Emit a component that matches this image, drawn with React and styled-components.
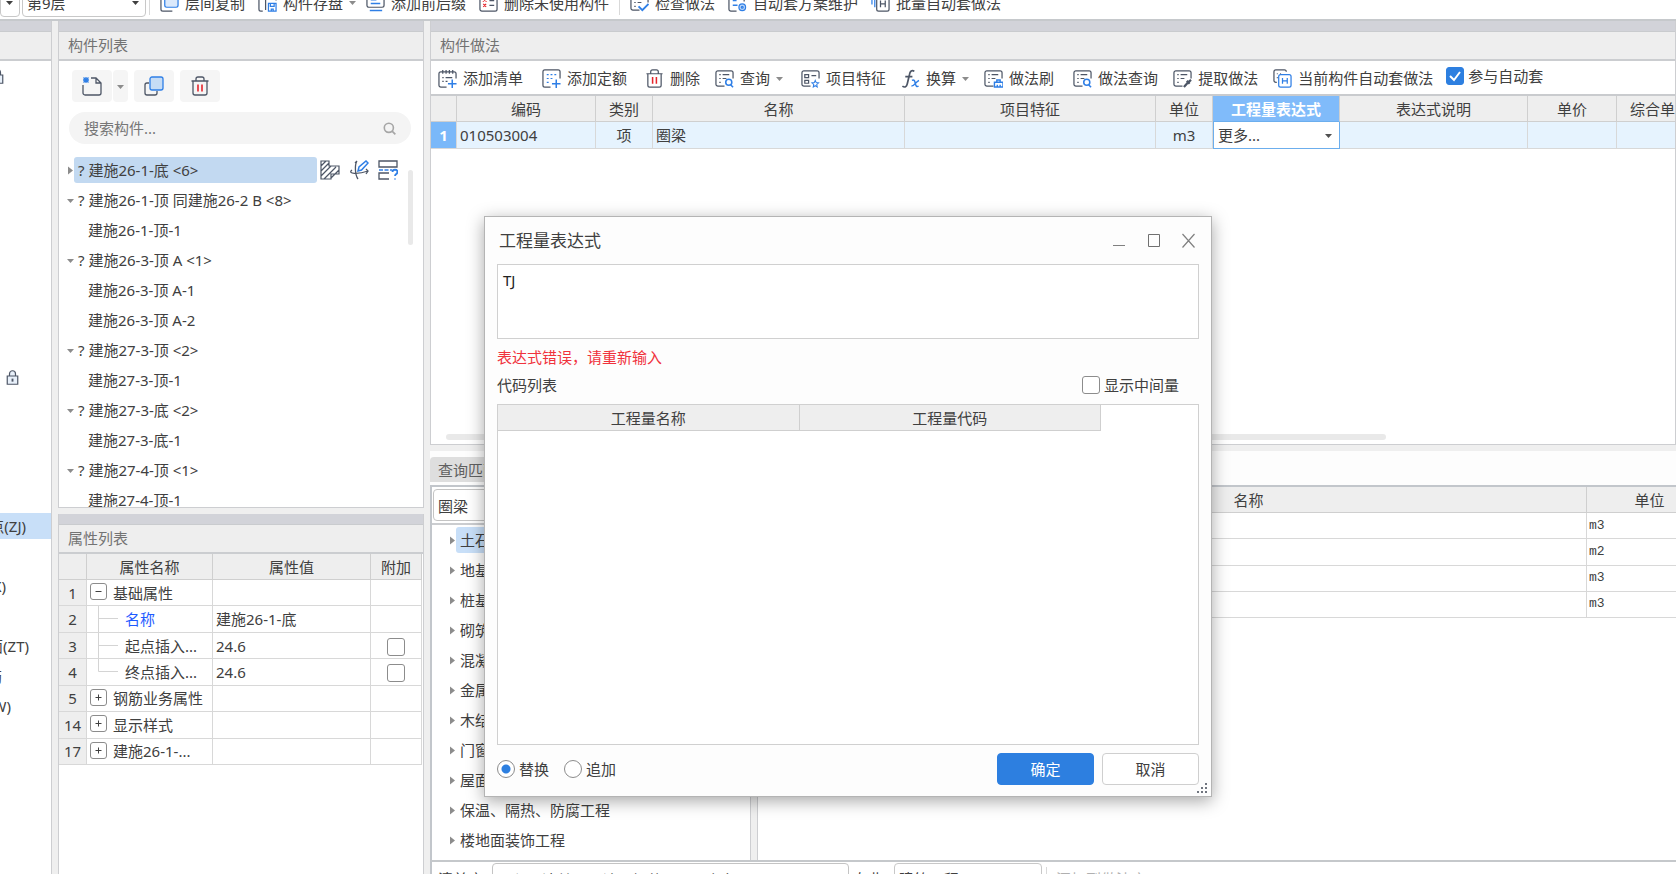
import React, { useState } from "react";
import styled, { createGlobalStyle } from "styled-components";

const GlobalStyle = createGlobalStyle`
	* {
		box-sizing: border-box;
	}
	body {
		margin: 0;
		overflow: hidden;
	}
	body, button, input, select, textarea {
		font-family: "Noto Sans", "Noto Sans CJK SC", sans-serif;
		font-size: 15px;
		line-height: 20px;
		color: #404040;
	}
	svg {
		flex: none;
	}
`;

const Page = styled.div`
	height: 100vh;
	display: flex;
	flex-direction: column;
	background-color: #efefef;
	position: relative;
	overflow: hidden;
	white-space: nowrap;
`;

/* top ribbon */
const Ribbon = styled.header`
	flex: none;
	height: 21px;
	display: flex;
	align-items: flex-end;
	overflow: hidden;
	background-color: #fff;
	border-bottom: 2px solid #c6c9cc;
`;
const RibbonRow = styled.div`
	height: 33px;
	display: flex;
	align-items: center;
`;
const Divider = styled.span`
	width: 1px;
	height: 24px;
	background-color: #d9d9d9;
	margin: ${(props) => props.$space};
`;

/* shared controls */
const ToolButton = styled.button`
	display: flex;
	align-items: center;
	gap: 6px;
	padding: 0;
	margin-right: ${(props) => (props.$gap || 15) + "px"};
	border: none;
	background: none;
	cursor: pointer;
	flex: none;
`;
const SelectWrap = styled.span`
	position: relative;
	display: flex;
	align-items: center;
	flex: none;
	width: ${(props) => props.$width};
	height: ${(props) => props.$height || "28px"};
	margin-right: ${(props) => (props.$cell ? "0" : "2px")};

	svg {
		position: absolute;
		right: 7px;
		pointer-events: none;
	}
`;
const Select = styled.select`
	appearance: none;
	width: 100%;
	height: 100%;
	padding: 0 4px;
	background-color: #fff;
	border: ${(props) => (props.$cell ? "none" : "1px solid #c8c8c8")};
	border-radius: ${(props) => (props.$cell ? "0" : "4px")};
	outline: none;
`;
const CheckBox = styled.input`
	appearance: none;
	flex: none;
	width: 18px;
	height: 18px;
	margin: 0;
	border: 1px solid #8c8c8c;
	border-radius: 3px;
	background-color: #fff;
	vertical-align: middle;

	&:checked {
		border-color: #2d7fe0;
		background: #2d7fe0
			url("data:image/svg+xml,%3Csvg xmlns='http://www.w3.org/2000/svg' viewBox='0 0 16 16'%3E%3Cpath d='M3 8l4 4 6-8' fill='none' stroke='white' stroke-width='2'/%3E%3C/svg%3E")
			center / 16px no-repeat;
	}
`;
const Radio = styled.input`
	appearance: none;
	width: 18px;
	height: 18px;
	margin: 0;
	border: 1px solid #8c8c8c;
	border-radius: 50%;
	background-color: #fff;

	&:checked {
		background: radial-gradient(circle, #2d7fe0 4px, #fff 5px);
	}
`;
const CheckLabel = styled.label`
	display: flex;
	align-items: center;
	gap: 4px;
	margin-right: ${(props) => (props.$right || 0) + "px"};
`;

/* panels */
const Workspace = styled.main`
	flex: 1;
	min-height: 0;
	display: flex;
	gap: 6px;
`;
const Column = styled.div`
	display: flex;
	flex-direction: column;
	gap: 6px;
	min-width: 0;
	flex: ${(props) => (props.$width ? `0 0 ${props.$width}` : "1")};
`;
const Panel = styled.section`
	display: flex;
	flex-direction: column;
	min-height: 0;
	overflow: hidden;
	background-color: #fff;
	border: 1px solid #cdced1;
	border-width: 0 1px 1px;
	flex: ${(props) => (props.$height ? `0 0 ${props.$height}` : "1")};
`;
const OpenPanel = styled(Panel)`
	border-bottom: none;
`;
const Band = styled.div`
	flex: none;
	height: 11px;
	background-color: #d2d3d9;
	border-bottom: 1px solid #c9cbce;
`;
const PanelTitle = styled.h2`
	flex: none;
	height: 29px;
	margin: 0;
	padding: 3px 9px;
	font-size: 15px;
	font-weight: 400;
	color: #737373;
	background-color: #eee;
	border-bottom: 2px solid #cbcdd0;
`;

/* navigation strip on the far left */
const NavPanel = styled(Panel)`
	border-width: 0 1px 0 0;
`;
const NavRow = styled.div`
	flex: none;
	height: ${(props) => (props.$active ? "26px" : "30px")};
	margin: ${(props) => (props.$active ? "2px 0" : "0")};
	display: flex;
	align-items: center;
	justify-content: flex-end;
	padding-right: ${(props) => props.$right}px;
	background-color: ${(props) => (props.$active ? "#c8dff8" : "transparent")};
`;
const NavSpace = styled.div`
	flex: none;
	height: ${(props) => props.$height};
`;

/* component list */
const ListTools = styled.div`
	display: flex;
	gap: 6px;
	padding: 9px 13px 10px;
`;
const SoftButton = styled.button`
	display: flex;
	align-items: center;
	justify-content: center;
	width: ${(props) => (props.$narrow ? "15px" : "40px")};
	height: 32px;
	padding: 0;
	border: none;
	border-radius: 4px;
	background-color: #f5f5f5;
	cursor: pointer;
`;
const SplitButton = styled.div`
	display: flex;
	gap: 1px;
`;
const SearchBox = styled.div`
	flex: none;
	display: flex;
	align-items: center;
	height: 32px;
	margin: 0 12px 11px 10px;
	padding: 0 15px;
	border-radius: 16px;
	background-color: #f4f4f4;
`;
const SearchInput = styled.input`
	flex: 1;
	min-width: 0;
	padding: 0;
	border: none;
	outline: none;
	background: none;

	&::placeholder {
		color: #777;
		opacity: 1;
	}
`;
const ListArea = styled.div`
	flex: 1;
	min-height: 0;
	display: flex;
`;
const Tree = styled.ul`
	list-style: none;
	flex: 1;
	min-width: 0;
	margin: 0;
	padding: 0 0 0 ${(props) => props.$indent}px;
	overflow: hidden;
`;
const TreeItem = styled.li`
	display: flex;
	align-items: center;
	height: 30px;
	padding-left: ${(props) => (props.$child ? "17px" : "0")};
`;
const TreeText = styled.span`
	flex: ${(props) => (props.$wide ? "0 0 243px" : "none")};
	height: 26px;
	line-height: 26px;
	margin-right: 3px;
	padding: 0 4px;
	border-radius: 3px;
	background-color: ${(props) => props.$bg || "transparent"};
`;
const RowIcons = styled.span`
	display: flex;
	gap: 9px;
`;
const Thumb = styled.div`
	flex: none;
	border-radius: 3px;
	background-color: #e9e9e9;
	width: ${(props) => props.$w};
	height: ${(props) => props.$h};
	margin: ${(props) => props.$m};
`;

/* grids */
const Grid = styled.table`
	table-layout: fixed;
	border-collapse: separate;
	border-spacing: 0;
	flex: none;
	width: ${(props) => props.$width};
	height: ${(props) => props.$height || "auto"};
`;
const Th = styled.th`
	height: 26px;
	padding: 0;
	font-weight: ${(props) => (props.$active ? 700 : 400)};
	color: ${(props) => (props.$active ? "#fff" : "#404040")};
	background-color: ${(props) => (props.$active ? "#80bbfa" : "#eee")};
	border-right: 1px solid #cfcfcf;
	border-bottom: 1px solid ${(props) => (props.$active ? "#6caeed" : "#cfcfcf")};
	overflow: hidden;
`;
const Td = styled.td`
	height: ${(props) => (props.$tall ? "27px" : "26px")};
	padding: ${(props) => (props.$flush ? "0" : "0 3px")};
	text-align: ${(props) => props.$align || "left"};
	background-color: ${(props) => props.$bg || "#fff"};
	border-right: 1px solid #d8d8d8;
	border-bottom: 1px solid #d8d8d8;
	overflow: hidden;
	line-height: 20px;
`;
const RowHead = styled(Td)`
	color: ${(props) => (props.$active ? "#fff" : "#404040")};
	font-weight: ${(props) => (props.$active ? 700 : 400)};
	background-color: ${(props) => (props.$active ? "#7ab8f9" : "#eee")};
`;
const EditCell = styled(Td)`
	padding: 0;
	border: 1px solid #6caeed;
	border-top: none;
`;
const UnitCell = styled(Td)`
	font-family: "Liberation Mono", monospace;
	font-size: 13px;
	padding: 0 2px;
`;
const PropName = styled.div`
	display: flex;
	align-items: center;
	height: 25px;
	color: ${(props) => (props.$link ? "#1f5bff" : "inherit")};
`;
const Expander = styled.button`
	display: flex;
	align-items: center;
	justify-content: center;
	width: 17px;
	height: 17px;
	margin: 0 6px 2px 3px;
	padding: 0;
	border: 1px solid #8c8c8c;
	border-radius: 3px;
	background-color: #fff;
`;

const Toolbar = styled.div`
	flex: none;
	height: 35px;
	display: flex;
	align-items: center;
	padding: 1px 0 0 7px;
	border-bottom: 2px solid #c9cbce;
	overflow: hidden;
`;
const AutoLabel = styled(CheckLabel)`
	align-self: flex-start;
	padding-top: 4px;
`;
const GridSpace = styled.div`
	flex: 1;
`;

/* query area */
const TabStrip = styled.div`
	flex: none;
	height: 34px;
	display: flex;
	align-items: flex-end;
	padding-bottom: 3px;
	background-color: #fdfdfd;
`;
const Tab = styled.button`
	height: 25px;
	padding: 0 8px;
	border: none;
	border-radius: 4px 4px 0 0;
	color: #606060;
	background-color: #dedede;
`;
const QueryArea = styled.section`
	flex: 1;
	min-height: 0;
	display: flex;
	flex-direction: column;
`;
const QueryBody = styled.div`
	flex: 1;
	min-height: 0;
	display: flex;
	gap: 6px;
	border-top: 2px solid #c2c6cb;
	border-left: 2px solid #c2c6cb;
`;
const QuerySide = styled.div`
	flex: 0 0 319px;
	display: flex;
	flex-direction: column;
	min-height: 0;
	background-color: #fff;
	border-right: 1px solid #cdced1;
`;
const QueryResult = styled.div`
	flex: 1;
	min-width: 0;
	overflow: hidden;
	background-color: #fff;
	border-left: 1px solid #cdced1;
`;
const FilterRow = styled.div`
	display: flex;
	padding: 2px 1px;
	border-bottom: 2px solid #cbcdd0;
`;
const TextInput = styled.input`
	flex: ${(props) => (props.$width ? `0 0 ${props.$width}` : "1")};
	min-width: 0;
	height: 32px;
	padding: 0 4px;
	border: 1px solid #c4c4c4;
	border-radius: 4px;
	background-color: #fff;
`;
const StatusBar = styled.footer`
	flex: none;
	height: 14px;
	display: flex;
	align-items: flex-start;
	padding: 0 0 0 6px;
	overflow: hidden;
	background-color: #fff;
	border-top: 2px solid #c5c8cb;
	border-left: 2px solid #c2c6cb;
`;
const StatusRow = styled.div`
	display: flex;
	align-items: center;
	height: 34px;
`;
const StatusLabel = styled.label`
	width: ${(props) => props.$width};
	text-align: ${(props) => props.$align || "left"};
	padding-right: 7px;
	color: ${(props) => (props.$muted ? "#b0b0b0" : "#404040")};
`;

/* expression dialog */
const Dialog = styled.form`
	position: absolute;
	top: 216px;
	left: 484px;
	width: 728px;
	height: 581px;
	display: flex;
	flex-direction: column;
	padding: 0 12px 11px;
	background-color: #fdfdfd;
	border: 1px solid #b4b4b4;
	box-shadow: 0 4px 16px rgba(0, 0, 0, 0.35);
`;
const DialogTitle = styled.div`
	flex: none;
	display: flex;
	align-items: center;
	height: 47px;
	padding: 0 2px;
`;
const DialogHeading = styled.h1`
	flex: 1;
	margin: 0;
	font-size: 17px;
	font-weight: 400;
	line-height: 24px;
`;
const WindowButton = styled.button`
	width: 16px;
	height: 16px;
	margin-left: 19px;
	padding: 0;
	border: none;
	background: none;
	display: flex;
`;
const Expression = styled.textarea`
	flex: none;
	height: 75px;
	padding: 5px;
	border: 1px solid #d0d0d0;
	background-color: #fff;
	color: #222;
	resize: none;
	outline: none;
`;
const ErrorText = styled.p`
	margin: 8px 0;
	color: #f0323c;
`;
const CodeHead = styled.div`
	display: flex;
	justify-content: space-between;
	margin-bottom: 9px;
`;
const CodeBox = styled.div`
	flex: 1;
	min-height: 0;
	background-color: #fff;
	border: 1px solid #d0d0d0;
`;
const DialogFooter = styled.div`
	display: flex;
	align-items: center;
	gap: 8px;
	margin-top: 8px;
`;
const RadioGroup = styled.div`
	flex: 1;
	display: flex;
	gap: 15px;
`;
const ActionButton = styled.button`
	width: 97px;
	height: 32px;
	border: 1px solid ${(props) => (props.$primary ? "#2d7fe0" : "#cfcfcf")};
	border-radius: 4px;
	color: ${(props) => (props.$primary ? "#fff" : "#404040")};
	background-color: ${(props) => (props.$primary ? "#2d7fe0" : "#fff")};
`;
const Grip = styled.svg`
	position: absolute;
	right: 3px;
	bottom: 2px;
`;

const INK = "#4d5666";
const BLUE = "#2f7fe6";
const RED = "#e5242b";

const frame = <path d="M10 18H3a2 2 0 0 1-2-2V4a2 2 0 0 1 2-2h14a2 2 0 0 1 2 2v6" />;
const lens = (
	<g stroke={BLUE} strokeWidth="1.6">
		<circle cx="14.5" cy="14" r="3.2" />
		<path d="M16.5 16.5l2.5 2.8" />
	</g>
);
const rows = <path d="M4.500 6h1.500M8 6h7M4.500 10h1.500M8 10h4M4.500 14h1.500" />;
const bin = (
	<>
		<path d="M1.500 5h17M6 5V3a2 2 0 0 1 2-2h4a2 2 0 0 1 2 2v2M3 5v12a2 2 0 0 0 2 2h10a2 2 0 0 0 2-2V5" />
		<path d="M8 8.500v7M12 8.500v7" stroke={RED} strokeWidth="1.6" />
	</>
);

const shapes = {
	addList: (
		<>
			<path d="M9 19H3a2 2 0 0 1-2-2V5a2 2 0 0 1 2-2h14a2 2 0 0 1 2 2v5M5 1v4M8.500 1v4M12 1v4M15.500 1v4M4.500 9h1.500M8 9h7M4.500 13h1.500M8 13h2" />
			<path d="M15 11v9M10.500 15.500h9" stroke={BLUE} strokeWidth="1.6" />
		</>
	),
	addQuota: (
		<>
			<path d="M5 1H3a2 2 0 0 0-2 2v14a2 2 0 0 0 2 2h6M5 1h12a2 2 0 0 1 2 2v7" />
			<path d="M5 6h2M9 6h2M13 6h2M5 10h2M9 10h2M5 14h2" stroke={BLUE} />
			<path d="M15 11v9M10.500 15.500h9" stroke={BLUE} strokeWidth="1.6" />
		</>
	),
	bin,
	query: <>{frame}{rows}{lens}</>,
	feature: (
		<>
			{frame}
			<path d="M4 6h4v3H4zM4 12h4v3H4zM11 7h5" />
			<path d="M15 12l1 2.300 2.500.3-1.900 1.700.5 2.500-2.100-1.200-2.100 1.200.5-2.500-1.900-1.700 2.500-.3z" stroke={BLUE} strokeWidth="1.100" />
		</>
	),
	fx: (
		<>
			<path d="M14 2.500c-2.500-2-4.500 0-5 3L6.500 16c-.5 2.500-2.500 4-5 2M4.500 8h7.500" strokeWidth="1.8" />
			<path d="M11.500 12c2-1 3 0 3.500 3s1.500 4 3.500 3M19 12c-3 .5-4.500 6-8 6" stroke={BLUE} strokeWidth="1.6" />
		</>
	),
	brush: (
		<>
			{frame}{rows}
			<path d="M11 19v-5h9v5zM13.500 14v-2.500h3.500V14M14 19v-2.500M17 19v-2.500" stroke={BLUE} strokeWidth="1.500" />
		</>
	),
	extract: (
		<>
			{frame}{rows}
			<path d="M11.500 19l4-4.500M14.500 12.500l3 3M16 14l3-2.500" strokeWidth="2.400" />
		</>
	),
	autoH: (
		<>
			<path d="M4 14H3a2 2 0 0 1-2-2V3a2 2 0 0 1 2-2h9a2 2 0 0 1 2 2M4 5h1M7.500 5h1M4 9h1" />
			<rect x="6" y="6" width="13" height="13" rx="2" stroke={BLUE} />
			<path d="M10 9.500v6M15 9.500v6M10 12.500h5" stroke={BLUE} />
		</>
	),
	batchH: (
		<>
			<path d="M1 3v9M4 3v12" stroke={BLUE} />
			<rect x="6" y="3" width="13" height="16" rx="2" />
			<path d="M10 8v7M15 8v7M10 11.500h5" />
		</>
	),
	newFile: (
		<>
			<path d="M9 2h5l5 5v10a2 2 0 0 1-2 2H3a2 2 0 0 1-2-2V9M14 2v5h5" />
			<path d="M4 1v6M1 4h6M1.500 1.500l5 5M6.500 1.500l-5 5" stroke={BLUE} />
		</>
	),
	copy: (
		<>
			<path d="M5 7H3a2 2 0 0 0-2 2v8a2 2 0 0 0 2 2h8a2 2 0 0 0 2-2v-2" />
			<rect x="6" y="1" width="13" height="13" rx="2" stroke={BLUE} fill="#c6dcf5" />
		</>
	),
	layerCopy: (
		<>
			<path d="M3 4a2 2 0 0 0-2 2v11a2 2 0 0 0 2 2h10" />
			<rect x="5" y="2" width="14" height="13" rx="2" stroke={BLUE} fill="#dbe9fb" />
		</>
	),
	save: (
		<>
			<path d="M4 3H3a2 2 0 0 0-2 2v12a2 2 0 0 0 2 2h2M8 18V3h9a2 2 0 0 1 2 2v3" />
			<path d="M11 11h8v8h-8zM13 11v3h4v-3M14 19v-2h2v2" stroke={BLUE} />
		</>
	),
	prefix: (
		<>
			<rect x="1" y="1" width="18" height="14" rx="2" />
			<path d="M5 7h6M5 11h10M4 18.500h13" stroke={BLUE} strokeWidth="1.6" />
		</>
	),
	unused: (
		<>
			<rect x="1" y="2" width="18" height="17" rx="2" />
			<path d="M4 6l4 3M8 6l-4 3M4.500 11.500l3 3M7.500 11.500l-3 3" stroke={RED} />
			<path d="M11 8h5M11 13h5" />
		</>
	),
	check: (
		<>
			{frame}{rows}
			<path d="M9 14l4 4 6.500-6.500" stroke={BLUE} strokeWidth="2" />
		</>
	),
	scheme: (
		<>
			<path d="M9 19H3a2 2 0 0 1-2-2V3M17 3v6" />
			<path d="M5 8h4M5 13h5" stroke={BLUE} strokeWidth="1.6" />
			<circle cx="15" cy="15" r="3.500" stroke={BLUE} fill="#bcd7f8" />
			<circle cx="15" cy="15" r="1" stroke={BLUE} />
		</>
	),
	hatch: (
		<path d="M1 1h8v5h10v8h-8v5H1zM1 6l5-5M1 11l8-8M1 16l10-10M4 19l12-12M11 18l8-8" strokeWidth="1.200" />
	),
	edit: (
		<>
			<path d="M8 1C5.500 5 6 15 9 19M3 10c-5 4 6 4.500 16 1M17 9l2 2-2 3M6 3L8 1" />
			<path d="M9 11l1-4 7-6 2 2-6.500 7z" stroke={BLUE} strokeWidth="1.5" fill="#fff" />
		</>
	),
	section: (
		<>
			<path d="M1 1h18v6H1zM11 19H1v-6h10" />
			<path d="M1 10h13" stroke={BLUE} strokeDasharray="4 1.500" />
			<path d="M14.500 12c0-3 5-3 5 0 0 2-2.500 2-2.500 4M17 18.500v1" stroke={BLUE} strokeWidth="1.800" />
		</>
	),
	lock: (
		<>
			<path d="M3 8h14v11H3zM6 8V5a4 4 0 0 1 8 0v3" strokeWidth="1.600" fill="#e8f0fa" />
			<path d="M10 11.500v4" strokeWidth="2.500" />
		</>
	),
	search: (
		<g stroke="#a6a6a6" strokeWidth="2.500">
			<circle cx="9" cy="9" r="7" />
			<path d="M14 14l5 5" />
		</g>
	),
};

const Icon = ({ name, size = 19 }) => (
	<svg width={size} height={size} viewBox="0 0 20 20" fill="none" stroke={INK} strokeWidth="1.300" aria-hidden="true">
		{shapes[name]}
	</svg>
);

const Caret = ({ dir = "down", color = "#8c8c8c" }) => (
	<svg width="7" height="9" viewBox="0 0 7 9" fill={color} aria-hidden="true">
		<path d={dir === "down" ? "M0 3h7L3.500 7z" : "M1 0.500v8l5-4z"} />
	</svg>
);

const ribbonItems = [
	{ icon: "layerCopy", text: "层间复制" },
	{ icon: "save", text: "构件存盘", caret: true, gap: 10 },
	{ icon: "prefix", text: "添加前后缀" },
	{ icon: "unused", text: "删除未使用构件", gap: 10, divider: true },
	{ icon: "check", text: "检查做法" },
	{ icon: "scheme", text: "自动套方案维护" },
	{ icon: "batchH", text: "批量自动套做法" },
];

const toolItems = [
	{ icon: "addList", text: "添加清单", gap: 19 },
	{ icon: "addQuota", text: "添加定额", gap: 18 },
	{ icon: "bin", text: "删除" },
	{ icon: "query", text: "查询", caret: true, gap: 18 },
	{ icon: "feature", text: "项目特征" },
	{ icon: "fx", text: "换算", caret: true },
	{ icon: "brush", text: "做法刷", gap: 19 },
	{ icon: "query", text: "做法查询" },
	{ icon: "extract", text: "提取做法" },
	{ icon: "autoH", text: "当前构件自动套做法", gap: 13 },
];

const components = [
	{ text: "? 建施26-1-底 <6>", closed: true, active: true },
	{ text: "? 建施26-1-顶 同建施26-2 B <8>" },
	{ text: "建施26-1-顶-1", child: true },
	{ text: "? 建施26-3-顶 A <1>" },
	{ text: "建施26-3-顶 A-1", child: true },
	{ text: "建施26-3-顶 A-2", child: true },
	{ text: "? 建施27-3-顶 <2>" },
	{ text: "建施27-3-顶-1", child: true },
	{ text: "? 建施27-3-底 <2>" },
	{ text: "建施27-3-底-1", child: true },
	{ text: "? 建施27-4-顶 <1>" },
	{ text: "建施27-4-顶-1", child: true },
];

const properties = [
	{ no: 1, name: "基础属性", group: "open" },
	{ no: 2, name: "名称", value: "建施26-1-底", link: true },
	{ no: 3, name: "起点插入...", value: "24.6", extra: true },
	{ no: 4, name: "终点插入...", value: "24.6", extra: true, last: true },
	{ no: 5, name: "钢筋业务属性", group: "closed" },
	{ no: 14, name: "显示样式", group: "closed" },
	{ no: 17, name: "建施26-1-...", group: "closed" },
];

const chapters = [
	"土石方工程",
	"地基处理与边坡支护工程",
	"桩基工程",
	"砌筑工程",
	"混凝土及钢筋混凝土工程",
	"金属结构工程",
	"木结构工程",
	"门窗工程",
	"屋面及防水工程",
	"保温、隔热、防腐工程",
	"楼地面装饰工程",
];

const navRows = [
	{ text: "自定义点(ZJ)", right: 25, active: true },
	{ text: "", right: 0 },
	{ text: "自定义线(ZX)", right: 45 },
	{ text: "", right: 0 },
	{ text: "自定义贴面(ZT)", right: 22 },
	{ text: "自定义钢筋", right: 49 },
	{ text: "尺寸标注(W)", right: 40 },
];

const Tools = ({ items, gap }) =>
	items.map((item) => (
		<React.Fragment key={item.text}>
			<ToolButton type="button" $gap={item.gap || gap}>
				<Icon name={item.icon} />
				{item.text}
				{item.caret && <Caret />}
			</ToolButton>
			{item.divider && <Divider $space="0 10px 0 0" />}
		</React.Fragment>
	));

const NavColumn = () => (
	<Column $width="52px">
		<NavPanel>
			<Band />
			<PanelTitle />
			<NavRow $right={46}>
				<Icon name="lock" size={15} />
			</NavRow>
			<NavSpace $height="271px" />
			<NavRow $right={31}>
				<Icon name="lock" size={15} />
			</NavRow>
			<NavSpace $height="119px" />
			{navRows.map((row, i) => (
				<NavRow key={i} $right={row.right} $active={row.active}>
					{row.text}
				</NavRow>
			))}
		</NavPanel>
	</Column>
);

const ComponentList = () => (
	<Panel $height="487px">
		<Band />
		<PanelTitle>构件列表</PanelTitle>
		<ListTools>
			<SplitButton>
				<SoftButton type="button" aria-label="新建">
					<Icon name="newFile" size={20} />
				</SoftButton>
				<SoftButton type="button" $narrow aria-label="新建选项">
					<Caret />
				</SoftButton>
			</SplitButton>
			<SoftButton type="button" aria-label="复制">
				<Icon name="copy" size={20} />
			</SoftButton>
			<SoftButton type="button" aria-label="删除">
				<Icon name="bin" size={20} />
			</SoftButton>
		</ListTools>
		<SearchBox>
			<SearchInput placeholder="搜索构件..." aria-label="搜索构件" />
			<Icon name="search" size={13} />
		</SearchBox>
		<ListArea>
			<Tree $indent={8}>
				{components.map((item) => (
					<TreeItem key={item.text} $child={item.child}>
						{!item.child && <Caret dir={item.closed ? "right" : "down"} />}
						<TreeText $wide={item.active} $bg={item.active && "#c2d9f1"}>
							{item.text}
						</TreeText>
						{item.active && (
							<RowIcons>
								<Icon name="hatch" size={20} />
								<Icon name="edit" size={20} />
								<Icon name="section" size={20} />
							</RowIcons>
						)}
					</TreeItem>
				))}
			</Tree>
			<Thumb $w="5px" $h="75px" $m="15px 10px 0 0" />
		</ListArea>
	</Panel>
);

const PropertyList = () => (
	<OpenPanel>
		<Band />
		<PanelTitle>属性列表</PanelTitle>
		<Grid $width="363px" $height="211px">
			<colgroup>
				<col width="28" />
				<col width="126" />
				<col width="158" />
				<col width="51" />
			</colgroup>
			<thead>
				<tr>
					<Th />
					<Th>属性名称</Th>
					<Th>属性值</Th>
					<Th>附加</Th>
				</tr>
			</thead>
			<tbody>
				{properties.map((row) => (
					<tr key={row.no}>
						<RowHead $align="center" $flush>{row.no}</RowHead>
						<Td $flush>
							<PropName $link={row.link}>
								{row.group ? (
									<Expander type="button" aria-label={row.name}>
										<svg width="7" height="7" stroke="#404040" aria-hidden="true">
											<path d={row.group === "open" ? "M0.500 3.500h6" : "M0.500 3.500h6M3.500 0.500v6"} />
										</svg>
									</Expander>
								) : (
									<svg width="38" height="26" fill="none" stroke="#d4d4d4" aria-hidden="true">
										<path d={row.last ? "M11.500 0v12.500H31" : "M11.500 0v26M11.500 12.500H31"} />
									</svg>
								)}
								{row.name}
							</PropName>
						</Td>
						<Td>{row.value}</Td>
						<Td $align="center" $flush>
							{row.extra && <CheckBox type="checkbox" aria-label={row.name + "附加"} />}
						</Td>
					</tr>
				))}
			</tbody>
		</Grid>
	</OpenPanel>
);

const rowBg = "#e6f3fe";

const Practice = () => (
	<Panel $height="424px">
		<Band />
		<PanelTitle>构件做法</PanelTitle>
		<Toolbar>
			<Tools items={toolItems} />
			<AutoLabel>
				<CheckBox type="checkbox" defaultChecked />
				参与自动套
			</AutoLabel>
		</Toolbar>
		<Grid $width="1273px">
			<colgroup>
				<col width="26" />
				<col width="139" />
				<col width="57" />
				<col width="252" />
				<col width="251" />
				<col width="57" />
				<col width="127" />
				<col width="188" />
				<col width="89" />
				<col width="87" />
			</colgroup>
			<thead>
				<tr>
					<Th />
					<Th>编码</Th>
					<Th>类别</Th>
					<Th>名称</Th>
					<Th>项目特征</Th>
					<Th>单位</Th>
					<Th $active>工程量表达式</Th>
					<Th>表达式说明</Th>
					<Th>单价</Th>
					<Th>综合单价</Th>
				</tr>
			</thead>
			<tbody>
				<tr>
					<RowHead $tall $active $align="center">1</RowHead>
					<Td $tall $bg={rowBg}>010503004</Td>
					<Td $tall $bg={rowBg} $align="center">项</Td>
					<Td $tall $bg={rowBg}>圈梁</Td>
					<Td $tall $bg={rowBg} />
					<Td $tall $bg={rowBg} $align="center">m3</Td>
					<EditCell $tall>
						<SelectWrap $cell $width="100%" $height="26px">
							<Select $cell aria-label="工程量表达式">
								<option>更多...</option>
							</Select>
							<Caret color="#505050" />
						</SelectWrap>
					</EditCell>
					<Td $tall $bg={rowBg} />
					<Td $tall $bg={rowBg} />
					<Td $tall $bg={rowBg} />
				</tr>
			</tbody>
		</Grid>
		<GridSpace />
		<Thumb $w="940px" $h="6px" $m="0 0 4px 15px" />
	</Panel>
);

const QueryPanel = () => (
	<QueryArea>
		<TabStrip>
			<Tab type="button">查询匹配清单</Tab>
		</TabStrip>
		<QueryBody>
			<QuerySide>
				<FilterRow>
					<TextInput defaultValue="圈梁" aria-label="查询" />
				</FilterRow>
				<Tree $indent={17}>
					{chapters.map((text, i) => (
						<TreeItem key={text}>
							<Caret dir="right" />
							<TreeText $bg={i === 0 && "#c8dff8"}>{text}</TreeText>
						</TreeItem>
					))}
				</Tree>
			</QuerySide>
			<QueryResult>
				<Grid $width="955px" $height="131px">
					<colgroup>
						<col width="26" />
						<col width="127" />
						<col width="676" />
						<col width="126" />
					</colgroup>
					<thead>
						<tr>
							<Th />
							<Th>编码</Th>
							<Th>名称</Th>
							<Th>单位</Th>
						</tr>
					</thead>
					<tbody>
						{["m3", "m2", "m3", "m3"].map((unit, i) => (
							<tr key={i}>
								<RowHead $align="center">{i + 1}</RowHead>
								<Td />
								<Td />
								<UnitCell>{unit}</UnitCell>
							</tr>
						))}
					</tbody>
				</Grid>
			</QueryResult>
		</QueryBody>
		<StatusBar>
			<StatusRow>
				<StatusLabel htmlFor="library" $width="54px">清单库:</StatusLabel>
				<TextInput id="library" $width="357px" defaultValue="工程量清单项目计量规范(2013-山东)" />
				<StatusLabel htmlFor="major" $width="45px" $align="right">专业:</StatusLabel>
				<SelectWrap $width="148px" $height="32px">
					<Select id="major">
						<option>建筑工程</option>
					</Select>
					<Caret />
				</SelectWrap>
				<Divider $space="0 9px 0 2px" />
				<StatusLabel as="span" $muted>添加到做法库</StatusLabel>
			</StatusRow>
		</StatusBar>
	</QueryArea>
);

const ExpressionDialog = () => {
	const [expression, setExpression] = useState("TJ");
	const [mode, setMode] = useState("replace");

	return (
		<Dialog onSubmit={(e) => e.preventDefault()}>
			<DialogTitle>
				<DialogHeading>工程量表达式</DialogHeading>
				<WindowButton type="button" aria-label="最小化">
					<svg width="16" height="16" stroke="#808080"><path d="M2 12.500h12" /></svg>
				</WindowButton>
				<WindowButton type="button" aria-label="最大化">
					<svg width="16" height="16" stroke="#707070" fill="none"><path d="M2.500 1.500h11v12h-11z" /></svg>
				</WindowButton>
				<WindowButton type="button" aria-label="关闭">
					<svg width="16" height="16" stroke="#808080" strokeWidth="1.200"><path d="M1.500 1l12 13.500M13.500 1l-12 13.500" /></svg>
				</WindowButton>
			</DialogTitle>
			<Expression
				aria-label="工程量表达式"
				value={expression}
				onChange={(e) => setExpression(e.target.value)}
			/>
			<ErrorText>表达式错误，请重新输入</ErrorText>
			<CodeHead>
				<span>代码列表</span>
				<CheckLabel $right={20}>
					<CheckBox type="checkbox" />
					显示中间量
				</CheckLabel>
			</CodeHead>
			<CodeBox>
				<Grid $width="603px">
					<thead>
						<tr>
							<Th>工程量名称</Th>
							<Th>工程量代码</Th>
						</tr>
					</thead>
				</Grid>
			</CodeBox>
			<DialogFooter>
				<RadioGroup>
					<CheckLabel>
						<Radio
							type="radio"
							name="mode"
							checked={mode === "replace"}
							onChange={() => setMode("replace")}
						/>
						替换
					</CheckLabel>
					<CheckLabel>
						<Radio
							type="radio"
							name="mode"
							checked={mode === "append"}
							onChange={() => setMode("append")}
						/>
						追加
					</CheckLabel>
				</RadioGroup>
				<ActionButton type="submit" $primary>确定</ActionButton>
				<ActionButton type="button">取消</ActionButton>
			</DialogFooter>
			<Grip width="11" height="11" fill="#70757f">
				<path d="M8 0h2v2H8zM4 4h2v2H4zM8 4h2v2H8zM0 8h2v2H0zM4 8h2v2H4zM8 8h2v2H8z" />
			</Grip>
		</Dialog>
	);
};

const App = () => (
	<Page>
		<GlobalStyle />
		<Ribbon>
			<RibbonRow>
				<SelectWrap $width="20px">
					<Select aria-label="分组">
						<option></option>
					</Select>
					<Caret color="#404040" />
				</SelectWrap>
				<SelectWrap $width="124px">
					<Select aria-label="楼层">
						<option>第9层</option>
					</Select>
					<Caret color="#404040" />
				</SelectWrap>
				<Divider $space="0 10px 0 1px" />
				<Tools items={ribbonItems} gap={13} />
			</RibbonRow>
		</Ribbon>
		<Workspace>
			<NavColumn />
			<Column $width="366px">
				<ComponentList />
				<PropertyList />
			</Column>
			<Column>
				<Practice />
				<QueryPanel />
			</Column>
		</Workspace>
		<ExpressionDialog />
	</Page>
);

export default App;
